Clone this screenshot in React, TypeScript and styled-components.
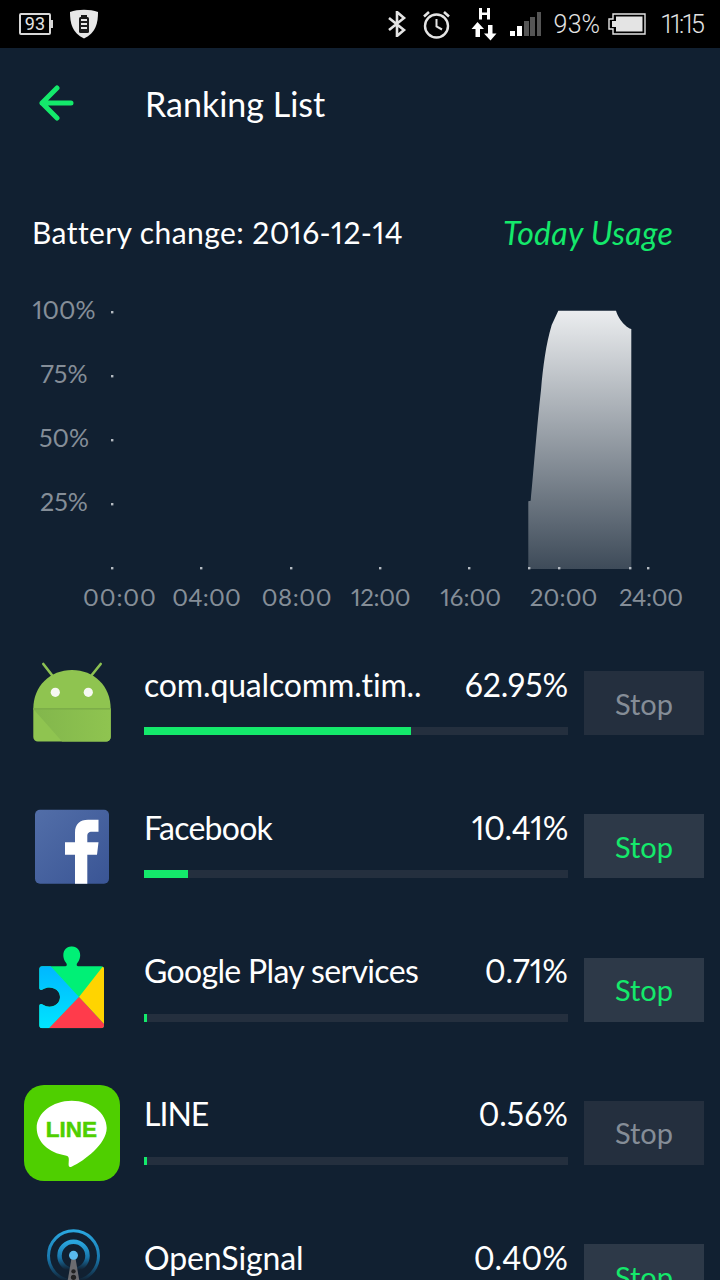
import React from "react";
import styled, { createGlobalStyle } from "styled-components";

const Global = createGlobalStyle`
  html, body { margin: 0; padding: 0; background: #112031; }
  * { box-sizing: border-box; }
`;

const FONT = `"Lato", "Open Sans", sans-serif`;
const GREEN = "#14e96b";

const Page = styled.div`
  width: 720px;
  height: 1280px;
  overflow: hidden;
  background: #112031;
  font-family: ${FONT};
  font-variant-numeric: proportional-nums;
  color: #fff;
`;

const StatusBar = styled.div`
  height: 48px;
  background: #000;
  display: flex;
  align-items: center;
  padding: 0 15px 0 19px;
  color: #e4e4e4;
  font-family: "Roboto", sans-serif;
`;
const StatusGroup = styled.div`
  display: flex;
  align-items: center;
`;
const Spacer = styled.div`
  flex: 1;
`;
const SmallBattery = styled.div`
  position: relative;
  width: 32px;
  height: 22px;
  margin-right: 18px;
  border: 2px solid #d8d8d8;
  border-radius: 2px;
  font-size: 18px;
  line-height: 18px;
  text-align: center;
  &::after {
    content: "";
    position: absolute;
    right: -4px;
    top: 5px;
    width: 2px;
    height: 8px;
    background: #d8d8d8;
  }
`;
const StatusText = styled.span<{ $gap: number; $track: number }>`
  font-size: 25px;
  font-weight: 300;
  letter-spacing: ${(p) => p.$track}px;
  margin-right: ${(p) => p.$gap}px;
`;
const StatusIcon = styled.svg<{ $gap: number }>`
  display: block;
  flex: none;
  margin-right: ${(p) => p.$gap}px;
`;

const Header = styled.div`
  height: 114px;
  display: flex;
  align-items: center;
  padding-left: 38px;
`;
const BackIcon = styled.svg`
  display: block;
  width: 36px;
  height: 36px;
  margin: 0 71px 4px 0;
`;
const Title = styled.h1`
  margin: 0 0 4px;
  font-size: 34px;
  font-weight: 400;
`;

const ChartHeader = styled.div`
  height: 40px;
  margin-top: 50px;
  margin-bottom: 27px;
  padding: 0 47px 0 32px;
  display: flex;
  align-items: center;
  justify-content: space-between;
`;
const ChartTitle = styled.div`
  font-size: 30px;
  letter-spacing: 0.42px;
`;
const ChartLink = styled.div`
  font-size: 32px;
  font-style: italic;
  letter-spacing: 0.3px;
  color: ${GREEN};
`;
const ChartBody = styled.div`
  display: flex;
  height: 300px;
  padding-left: 24px;
`;
const YAxis = styled.div`
  width: 80px;
  display: flex;
  flex-direction: column;
`;
const YLabel = styled.div`
  height: 64px;
  padding-bottom: 4px;
  display: flex;
  align-items: center;
  justify-content: center;
  font-size: 25px;
  color: #858e98;
`;
const Plot = styled.svg`
  display: block;
  width: 560px;
  height: 300px;
`;
const XAxis = styled.div`
  display: grid;
  grid-template-columns: repeat(7, 89.33px);
  height: 36px;
  padding: 0 0 2px 83px;
  align-items: center;
`;
const XLabel = styled.div<{ $track: number }>`
  font-size: 24px;
  letter-spacing: ${(p) => p.$track}px;
  color: #858e98;
  white-space: nowrap;
`;

const List = styled.div`
  margin-top: 40px;
  display: flex;
  flex-direction: column;
  gap: 47.33px;
  padding: 0 16px 0 24px;
`;
const Row = styled.div`
  display: flex;
  height: 96px;
  flex: none;
  align-items: center;
`;
const IconSlot = styled.div`
  width: 96px;
  height: 96px;
  flex: none;
  margin-right: 24px;
`;
const AppSvg = styled.svg`
  display: block;
  width: 96px;
  height: 96px;
`;
const Info = styled.div`
  width: 424px;
  flex: none;
  margin-right: 16px;
  align-self: flex-start;
  padding-top: 8px;
`;
const InfoTop = styled.div`
  display: flex;
  justify-content: space-between;
  align-items: center;
  height: 42px;
  font-size: 32px;
`;
const AppName = styled.span<{ $track: number }>`
  white-space: nowrap;
  letter-spacing: ${(p) => p.$track}px;
`;
const Track = styled.div`
  height: 8px;
  margin-top: 22px;
  background: #242f3e;
`;
const Fill = styled.div`
  height: 100%;
  background: ${GREEN};
`;
const StopButton = styled.button<{ $on: boolean }>`
  width: 120px;
  height: 64px;
  flex: none;
  border: 0;
  padding: 0;
  font-family: ${FONT};
  font-size: 29px;
  background: ${(p) => (p.$on ? "#2d3948" : "#242f3e")};
  color: ${(p) => (p.$on ? GREEN : "#858d97")};
`;

const AndroidIcon = () => (
  <AppSvg viewBox="24 655 96 96">
    <defs>
      <linearGradient id="af" x1="0" y1="0" x2="1" y2="0">
        <stop offset="0" stopColor="#82b64c" />
        <stop offset="1" stopColor="#8fc450" />
      </linearGradient>
    </defs>
    <path d="M52.7 676 L43.3 664 M91 676 L100.7 664" stroke="#8cc152" strokeWidth="2.6" strokeLinecap="round" />
    <path d="M33.3 709 C33.3 686 50 670 72 670 C94 670 110.7 686 110.7 709 Z" fill="#8fc450" />
    <path d="M33.3 709 H110.7 V737 a4.5 4.5 0 0 1 -4.5 4.5 H37.8 a4.5 4.5 0 0 1 -4.5 -4.5 Z" fill="#8fc450" />
    <path d="M33.3 709 H110.7 V737 a4.5 4.5 0 0 1 -4.5 4.5 H62 Z" fill="url(#af)" />
    <rect x="33.3" y="708" width="77.4" height="1.6" fill="#7dae49" />
    <circle cx="55.3" cy="692.3" r="4.6" fill="#f6f8f2" />
    <circle cx="88.3" cy="692.3" r="4.6" fill="#f6f8f2" />
  </AppSvg>
);

const FacebookIcon = () => (
  <AppSvg viewBox="24 798.33 96 96">
    <defs>
      <linearGradient id="fb" x1="0" y1="0" x2="1" y2="1">
        <stop offset="0" stopColor="#526ea8" />
        <stop offset="1" stopColor="#3a5595" />
      </linearGradient>
    </defs>
    <rect x="35" y="810" width="74" height="74" rx="5" fill="url(#fb)" />
    <path d="M75 884 V855 H65 V842.7 H75 V833 C75 824 80 820 88 820 H98.5 V832 H92 C88.5 832 87.3 833.5 87.3 836.5 V842.7 H98.5 L97 855 H87.3 V884 Z" fill="#fff" />
  </AppSvg>
);

const PlayIcon = () => (
  <AppSvg viewBox="24 941.66 96 96">
    <defs>
      <linearGradient id="pb" x1="0" y1="0" x2="0" y2="1">
        <stop offset="0" stopColor="#00b4ff" />
        <stop offset="1" stopColor="#00e6ff" />
      </linearGradient>
      <clipPath id="pc">
        <path d="M42.3 966 H64 C67 966 67.5 964.5 66 962.5 C60 954 65 946 71.7 946 C78.5 946 83.5 954 77.5 962.5 C76 964.5 76.5 966 79.5 966 H101 a3 3 0 0 1 3 3 V1025 a3 3 0 0 1 -3 3 H42.3 a3 3 0 0 1 -3 -3 V1006 C39.3 1004 41 1003 43 1004.5 C50 1009 60 1005 60 996.7 C60 988.5 50 984.5 43 989 C41 990.5 39.3 989.5 39.3 987.5 V969 a3 3 0 0 1 3 -3 Z" />
      </clipPath>
    </defs>
    <g clipPath="url(#pc)">
      <rect x="36" y="944" width="70" height="86" fill="#00f076" />
      <path d="M36 962 H47 L79 996.7 L47 1030 H36 Z" fill="url(#pb)" />
      <path d="M106 962 L79 996.7 L110 1030 H106 Z" fill="#ffd400" />
      <path d="M47 1030 L79 996.7 L110 1030 Z" fill="#ff3b4b" />
    </g>
  </AppSvg>
);

const LineIcon = () => (
  <AppSvg viewBox="24 1085 96 96">
    <rect x="24" y="1085" width="96" height="96" rx="20" fill="#4fcf00" />
    <path d="M71.7 1100.7 C52.4 1100.7 36.7 1113 36.7 1128 C36.7 1142 49 1153 65.5 1155.4 C68.5 1156 69 1157.5 68.8 1160 L68.6 1164 C68.5 1167 69.5 1167.6 72 1166.5 C84 1161 106.7 1144 106.7 1128 C106.7 1113 91 1100.7 71.7 1100.7 Z" fill="#fff" />
    <text x="71.5" y="1137" textAnchor="middle" fontFamily="Liberation Sans, sans-serif" fontWeight="700" fontSize="22.5" fill="#4fcf00" stroke="#4fcf00" strokeWidth="0.5">LINE</text>
  </AppSvg>
);

const SignalIcon = () => (
  <AppSvg viewBox="24 1227.66 96 96">
    <defs>
      <linearGradient id="os" x1="0" y1="0" x2="0" y2="1">
        <stop offset="0" stopColor="#2aa7e0" />
        <stop offset="0.55" stopColor="#1877ad" />
        <stop offset="1" stopColor="#112031" />
      </linearGradient>
    </defs>
    <circle cx="73.5" cy="1255.5" r="25" fill="none" stroke="url(#os)" strokeWidth="3" />
    <circle cx="73.5" cy="1255.5" r="14" fill="none" stroke="url(#os)" strokeWidth="4.5" />
    <path d="M71.5 1258 L66 1290 H81 L75.5 1258 Z" fill="#6b6b6f" />
    <circle cx="73.5" cy="1271" r="2.2" fill="#222" />
    <circle cx="73.5" cy="1277" r="2.6" fill="#222" />
    <circle cx="73.5" cy="1255" r="4.5" fill="#59b9ee" />
  </AppSvg>
);

const apps = [
  { name: "com.qualcomm.tim..", nameTrack: -0.15, pct: "62.95%", pctTrack: -0.1, w: 63, on: false, Icon: AndroidIcon },
  { name: "Facebook", nameTrack: -0.75, pct: "10.41%", pctTrack: -0.3, w: 10.41, on: true, Icon: FacebookIcon },
  { name: "Google Play services", nameTrack: -0.65, pct: "0.71%", pctTrack: 0, w: 0.71, on: true, Icon: PlayIcon },
  { name: "LINE", nameTrack: -1, pct: "0.56%", pctTrack: 0, w: 0.71, on: false, Icon: LineIcon },
  { name: "OpenSignal", nameTrack: -0.1, pct: "0.40%", pctTrack: 0, w: 0.71, on: true, Icon: SignalIcon },
];

const yLabels = ["100%", "75%", "50%", "25%"];
const xLabels = [
  { t: "00:00", track: 0.9 },
  { t: "04:00", track: 0.2 },
  { t: "08:00", track: 0.6 },
  { t: "12:00", track: -0.3 },
  { t: "16:00", track: 0 },
  { t: "20:00", track: 0.2 },
  { t: "24:00", track: -0.3 },
];
const dots: [number, number][] = [
  [112, 312], [112, 376], [112, 440], [112, 504], [112, 568],
  [201, 568], [291, 568], [380, 568], [469, 568], [529, 568], [559, 568], [630, 568], [648, 568],
];

export default function App() {
  return (
    <Page>
      <Global />
      <StatusBar>
        <StatusGroup>
          <SmallBattery>93</SmallBattery>
          <StatusIcon $gap={0} width="30" height="30" viewBox="0 0 30 30">
            <path d="M1 3 C9 0 21 0 29 3 C29 14 27 24 15 29.5 C3 24 1 14 1 3 Z" fill="#e8e8e8" />
            <rect x="10" y="8" width="10" height="16" rx="1.5" fill="#1c1c1c" />
            <rect x="12" y="6" width="6" height="2" fill="#1c1c1c" />
            <path d="M12 11 H18 M12 15 H18 M12 19 H18" stroke="#e8e8e8" strokeWidth="2" />
          </StatusIcon>
        </StatusGroup>
        <Spacer />
        <StatusGroup>
          <StatusIcon $gap={15} width="20" height="26" viewBox="0 0 20 26" fill="none" stroke="#e4e4e4" strokeWidth="2.6">
            <path d="M2 7 L17 19 L10 25 V1 L17 7 L2 19" />
          </StatusIcon>
          <StatusIcon $gap={20} width="29" height="29" viewBox="0 0 29 29" fill="none" stroke="#e4e4e4" strokeWidth="2.4">
            <circle cx="14.5" cy="16" r="11.5" />
            <path d="M14.5 9 V16.5 L20 19.5" strokeWidth="2" />
            <path d="M2 6.5 L7 2 M27 6.5 L22 2" strokeWidth="2.6" />
          </StatusIcon>
          <StatusIcon $gap={13} width="26" height="34" viewBox="0 0 26 34" fill="#fff">
            <path d="M8 1 H11 V5.5 H16 V1 H19 V12.5 H16 V8 H11 V12.5 H8 Z" />
            <path d="M6.5 15 L13 22 H9 V30 H4.5 V22 H0.5 Z" />
            <path d="M19.5 33.5 L13 26.5 H17 V18 H21.5 V26.5 H25.5 Z" />
          </StatusIcon>
          <StatusIcon $gap={12} width="32" height="25" viewBox="0 0 32 25" fill="#fff">
            <rect x="0" y="19" width="5" height="5" />
            <rect x="7" y="14" width="5" height="10" />
            <rect x="14" y="9" width="5" height="15" fill="#555" />
            <rect x="20" y="5" width="5" height="19" fill="#555" />
            <rect x="27" y="0" width="4" height="24" fill="#555" />
          </StatusIcon>
          <StatusText $gap={8} $track={0}>93%</StatusText>
          <StatusIcon $gap={15} width="38" height="22" viewBox="0 0 38 22">
            <path d="M5 1 H37 V21 H5 V16 H1 V6 H5 Z" fill="#000" stroke="#e4e4e4" strokeWidth="1.4" />
            <path d="M8 3.5 H34.5 V18.5 H8 V14 H4 V8 H8 Z" fill="#e4e4e4" />
          </StatusIcon>
          <StatusText $gap={2} $track={-2}>11:15</StatusText>
        </StatusGroup>
      </StatusBar>

      <Header>
        <BackIcon viewBox="0 0 36 36" fill="none" stroke={GREEN} strokeWidth="5" strokeLinecap="round" strokeLinejoin="round">
          <path d="M33 18 H4 M19 3 L4 18 L19 33" />
        </BackIcon>
        <Title>Ranking List</Title>
      </Header>

      <ChartHeader>
        <ChartTitle>Battery change: 2016-12-14</ChartTitle>
        <ChartLink>Today Usage</ChartLink>
      </ChartHeader>

      <ChartBody>
        <YAxis>
          {yLabels.map((l) => (
            <YLabel key={l}>{l}</YLabel>
          ))}
        </YAxis>
        <Plot viewBox="104 279 560 300">
          <defs>
            <linearGradient id="area" x1="0" y1="0" x2="0" y2="1">
              <stop offset="0" stopColor="#ebedef" />
              <stop offset="1" stopColor="#3e4b59" />
            </linearGradient>
          </defs>
          <path
            d="M528.3 569 V501.3 L530.7 500.7 C533 478 537 425 541 390 C543 366 546 344 551.7 325 L558.3 310.7 H616 C617 314 618 316 620 319.3 C621.5 321.5 623 323.5 625 325 C627 327 629 328.5 631.3 329 V569 Z"
            fill="url(#area)"
          />
          {dots.map(([x, y]) => (
            <rect key={`${x}-${y}`} x={x - 1} y={y - 1} width="2.4" height="2.4" fill="#b4bac1" />
          ))}
        </Plot>
      </ChartBody>
      <XAxis>
        {xLabels.map((l) => (
          <XLabel key={l.t} $track={l.track}>{l.t}</XLabel>
        ))}
      </XAxis>

      <List>
        {apps.map(({ name, nameTrack, pct, pctTrack, w, on, Icon }) => (
          <Row key={name}>
            <IconSlot>
              <Icon />
            </IconSlot>
            <Info>
              <InfoTop>
                <AppName $track={nameTrack}>{name}</AppName>
                <AppName $track={pctTrack}>{pct}</AppName>
              </InfoTop>
              <Track>
                <Fill style={{ width: `${w}%` }} />
              </Track>
            </Info>
            <StopButton $on={on}>Stop</StopButton>
          </Row>
        ))}
      </List>
    </Page>
  );
}
